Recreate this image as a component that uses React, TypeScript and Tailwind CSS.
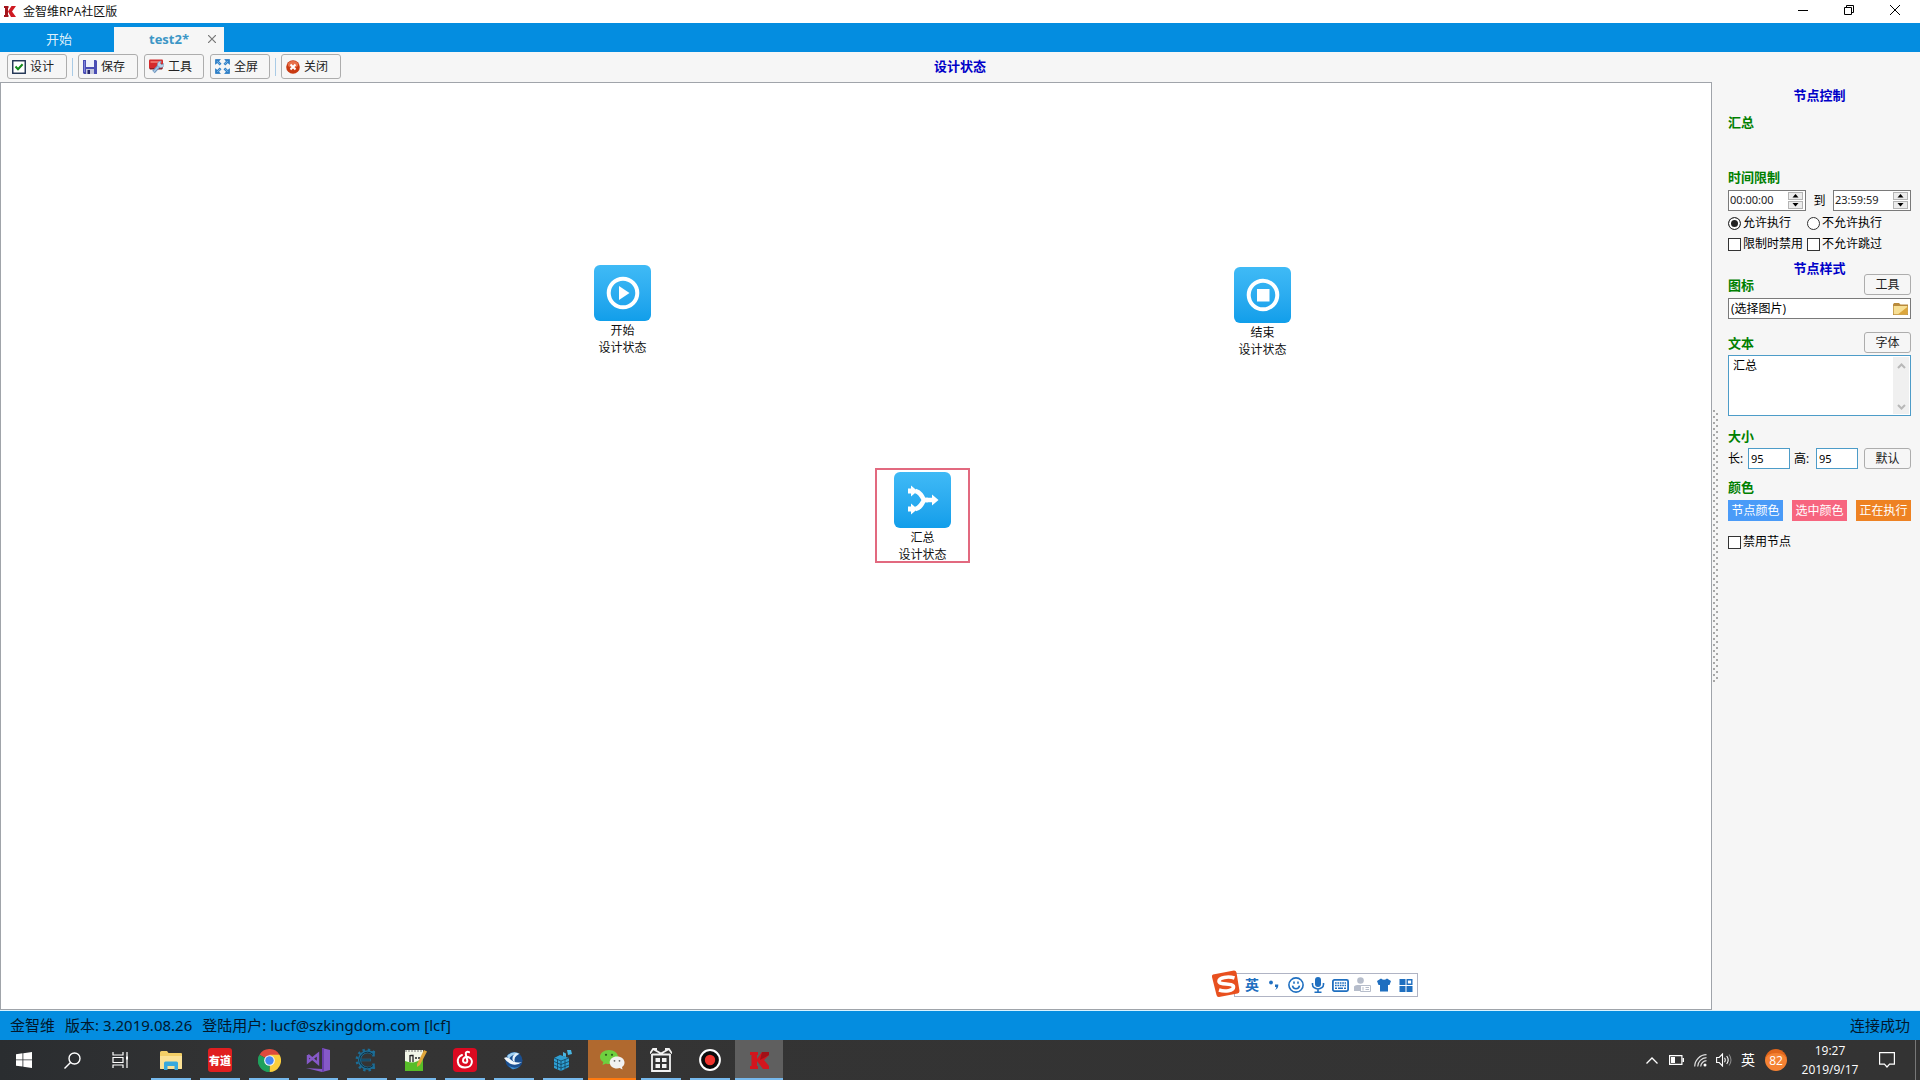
import React from "react";

type Kids = { children?: React.ReactNode };

function ToolButton({ icon, label }: { icon: React.ReactNode; label: string }) {
  return (
    <button className="flex h-[25px] w-[60px] items-center gap-1 rounded-[3px] border border-[#adadad] bg-[#f6f6f6] pl-1 text-xs text-[#222]">
      {icon}
      <span className="whitespace-nowrap">{label}</span>
    </button>
  );
}

const CheckIcon = () => (
  <svg width="14" height="14" viewBox="0 0 14 14">
    <rect x=".75" y=".75" width="12.5" height="12.5" fill="#fff" stroke="#1c3050" strokeWidth="1.4" />
    <path d="M3.5 6.5 6 9.2l4.6-5" fill="none" stroke="#128a1a" strokeWidth="2" />
  </svg>
);

const SaveIcon = () => (
  <svg width="14" height="14" viewBox="0 0 14 14">
    <path d="M0 0h13l1 1v13H1L0 13z" fill="#4a4db4" />
    <path d="M3 0h8v7H3z" fill="#eef0fb" />
    <path d="M1 1h1v11H1z" fill="#8084da" />
    <path d="M3 9h8v5H3z" fill="#c3c6dc" />
    <path d="M4.500 10h2.500v4H4.500z" fill="#26286c" />
  </svg>
);

const ToolIcon = () => (
  <svg width="15" height="15" viewBox="0 0 15 15">
    <path d="M0 1.500Q0 .5 1 .5h12q1 0 1 1V9H0z" fill="#d42a2b" />
    <path d="M1.500 2h11v2h-11z" fill="#ee6a62" />
    <path d="M0 9h14l-1 1.500H1z" fill="#8f1c20" />
    <path d="m4.500 13 6-6.500" stroke="#6f96bd" strokeWidth="3.400" />
    <path d="m4.700 12.800 6-6.500" stroke="#a9c8e4" strokeWidth="1.400" />
    <path d="M8.500 6.500q-.5-4 3.500-4.500l-.8 2.300 1.600 1.400L15 4.500q.5 4-3.500 4.300z" fill="#bcd3e8" stroke="#6f96bd" strokeWidth=".6" />
  </svg>
);

const FullIcon = () => (
  <svg width="15" height="15" viewBox="0 0 15 15" fill="#2f7fc6" stroke="#2f7fc6">
    {["", "rotate(90 7.5 7.5)", "rotate(180 7.5 7.5)", "rotate(270 7.5 7.5)"].map((t) => (
      <g key={t} transform={t}>
        <path d="M.5.5h4.8L.5 5.300z" strokeWidth=".8" />
        <path d="m2 2 3.600 3.600" strokeWidth="2.600" />
        <path d="M2 2.200 5 5.200" strokeWidth=".8" stroke="#9accf2" />
      </g>
    ))}
  </svg>
);

const CloseBall = () => (
  <svg width="14" height="14" viewBox="0 0 14 14">
    <circle cx="7" cy="7" r="6.8" fill="#c93a12" />
    <ellipse cx="7" cy="4.5" rx="5.2" ry="3.6" fill="#e8704a" />
    <path d="m4.5 4.5 5 5m0-5-5 5" stroke="#fff" strokeWidth="2" />
  </svg>
);

const TitleLogo = () => (
  <svg width="12" height="11" viewBox="0 0 12 11">
    <path d="M0 0h4.500v2H4v7h.5v2H0V9h1V2H0z" fill="#a3141b" />
    <path d="M7.500 0H12L8 5.500l4 5.500H7L4 5.500z" fill="#cf1a22" />
  </svg>
);

const TaskLogo = () => (
  <svg width="19" height="17" viewBox="0 0 19 17">
    <path d="M0 0h8v3H7v11h1v3H0v-3h1.500V3H0z" fill="#d2151d" />
    <path d="M12 0h7v3l-5 5 5 6v3h-6L7 9V7z" fill="#d2151d" />
    <path d="M12 0h7v3l-9 5z" fill="#a01117" />
  </svg>
);

function Node({ place, label, selected, children }: { place: string; label: string; selected?: boolean } & Kids) {
  return (
    <div
      className={`absolute flex h-[95px] w-[95px] flex-col items-center border-2 pt-0.5 text-xs text-[#111] ${place} ${
        selected ? "border-[#e2697f]" : "border-transparent"
      }`}
    >
      <div className="mb-px flex h-14 w-[57px] shrink-0 items-center justify-center rounded-[6px] bg-linear-to-b from-[#3fbaf6] to-[#109eea]">
        {children}
      </div>
      <span className="leading-[17px]">{label}</span>
      <span className="leading-[17px]">设计状态</span>
    </div>
  );
}

const Heading = ({ children }: Kids) => (
  <h2 className="text-center text-[13px] leading-4 font-bold text-[#0000c8]">{children}</h2>
);
const Label = ({ children }: Kids) => <h3 className="text-[13px] leading-4 font-bold text-[#008000]">{children}</h3>;

const SmallButton = ({ children }: Kids) => (
  <button className="h-[21px] w-[47px] rounded-[3px] border border-[#adadad] bg-[#f6f6f6] text-xs leading-none text-[#222]">
    {children}
  </button>
);

function TimeBox({ value, label }: { value: string; label: string }) {
  return (
    <div className="flex h-[21px] w-[78px] items-center border border-[#7a7a7a] bg-white pr-0.5">
      <input
        aria-label={label}
        defaultValue={value}
        className="w-0 flex-1 pl-px font-['Noto_Sans',sans-serif] text-[11px] text-[#222] outline-none"
      />
      <div className="flex w-[15px] flex-col gap-px">
        {["M.5 3.500h6L3.500 0z", "M.5 0h6L3.500 3.500z"].map((d) => (
          <button key={d} aria-label={label} className="flex h-2 items-center justify-center border border-[#b4b4b4] bg-[#ececec]">
            <svg width="7" height="4" viewBox="0 0 7 4">
              <path d={d} fill="#000" />
            </svg>
          </button>
        ))}
      </div>
    </div>
  );
}

function Choice({ type, label, checked }: { type: "radio" | "checkbox"; label: string; checked?: boolean }) {
  return (
    <label className="flex items-center gap-0.5 text-xs leading-4 whitespace-nowrap text-black">
      {type === "radio" ? (
        <input
          type="radio"
          name="permission"
          defaultChecked={checked}
          className="h-[13px] w-[13px] appearance-none rounded-full border border-[#333] bg-white checked:bg-[#222] checked:shadow-[inset_0_0_0_2px_white]"
        />
      ) : (
        <input type="checkbox" className="h-[13px] w-[13px] appearance-none border border-[#333] bg-white checked:bg-[#333]" />
      )}
      {label}
    </label>
  );
}

function SidePanel() {
  return (
    <aside className="flex w-[193px] shrink-0 flex-col pt-[5px] pr-[9px] pl-px">
      <Heading>节点控制</Heading>
      <div className="mt-[11px]">
        <Label>汇总</Label>
      </div>
      <div className="mt-[39px]">
        <Label>时间限制</Label>
      </div>
      <div className="mt-[5px] flex items-center justify-between text-xs">
        <TimeBox value="00:00:00" label="开始时间" />
        <span>到</span>
        <TimeBox value="23:59:59" label="结束时间" />
      </div>
      <div className="mt-1 grid grid-cols-[79px_1fr] gap-y-[5px]">
        <Choice type="radio" label="允许执行" checked />
        <Choice type="radio" label="不允许执行" />
        <Choice type="checkbox" label="限制时禁用" />
        <Choice type="checkbox" label="不允许跳过" />
      </div>
      <div className="mt-2">
        <Heading>节点样式</Heading>
      </div>
      <div className="-mt-0.5 flex h-[21px] items-center justify-between">
        <Label>图标</Label>
        <SmallButton>工具</SmallButton>
      </div>
      <div className="mt-[3px] flex h-[21px] items-center border border-[#7a7a7a] bg-white pr-0.5">
        <input aria-label="图标" defaultValue="(选择图片)" className="w-0 flex-1 pl-0.5 text-xs outline-none" />
        <button aria-label="选择图片">
          <svg width="15" height="12" viewBox="0 0 15 12">
            <path d="M0 1.500 1 0h5l1.500 1.500H15V12H0z" fill="#b98a3c" />
            <path d="M.7 3h13.600v8.300H.7z" fill="#f7df94" />
            <path d="M14.300 4v7.300H5z" fill="#dca63c" />
          </svg>
        </button>
      </div>
      <div className="mt-[13px] flex h-[21px] items-center justify-between">
        <Label>文本</Label>
        <SmallButton>字体</SmallButton>
      </div>
      <div className="mt-0.5 flex h-[61px] border border-[#4d9cc8] bg-white p-px">
        <textarea aria-label="文本" defaultValue="汇总" className="w-0 flex-1 resize-none pl-[3px] text-xs leading-[18px] outline-none" />
        <div className="flex w-4 flex-col items-center justify-between bg-[#f0f0f0] pt-1.5 pb-1">
          {["m1 5 3.500-3.500L8 5", "m1 1 3.500 3.500L8 1"].map((d) => (
            <svg key={d} width="9" height="6" viewBox="0 0 9 6" fill="none" stroke="#b8b8b8" strokeWidth="2">
              <path d={d} />
            </svg>
          ))}
        </div>
      </div>
      <div className="mt-3">
        <Label>大小</Label>
      </div>
      <div className="mt-1 flex items-center text-xs">
        <label className="flex items-center">
          <span className="w-5">长:</span>
          <input defaultValue="95" className="h-[21px] w-[42px] border border-[#4d9cc8] bg-white pl-0.5 font-['Noto_Sans',sans-serif] text-[11px]" />
        </label>
        <label className="ml-1 flex items-center">
          <span className="w-[22px]">高:</span>
          <input defaultValue="95" className="h-[21px] w-[42px] border border-[#4d9cc8] bg-white pl-0.5 font-['Noto_Sans',sans-serif] text-[11px]" />
        </label>
        <div className="ml-auto flex">
          <SmallButton>默认</SmallButton>
        </div>
      </div>
      <div className="mt-2.5">
        <Label>颜色</Label>
      </div>
      <div className="mt-[5px] flex justify-between text-xs text-white">
        <button className="h-[21px] w-[55px] bg-[#4a9bf8]">节点颜色</button>
        <button className="h-[21px] w-[55px] bg-[#f7657f]">选中颜色</button>
        <button className="h-[21px] w-[55px] bg-[#ee8223]">正在执行</button>
      </div>
      <div className="mt-[13px]">
        <Choice type="checkbox" label="禁用节点" />
      </div>
    </aside>
  );
}

const ImeCell = ({ children }: Kids) => <div className="flex w-[22px] items-center justify-center">{children}</div>;

function ImeBar() {
  return (
    <div className="absolute right-[293px] bottom-[12px] flex h-6 w-[184px] justify-end border border-[#b0b4c4] bg-white text-[#1f6fc0]">
      <svg className="absolute -top-[5px] -left-6" width="30" height="30" viewBox="0 0 30 30">
        <path d="m2 5.500 21-4q2 0 2.500 2L28.500 22q0 2-2 2.500L8 28q-2 .3-2.500-2L1 8Q.5 6 2 5.500z" fill="#e8501f" />
        <path d="M23.500 9C17 7 8 8.500 8 12.200c0 4.300 14.500 1.300 14.500 5.800 0 3.800-8.500 5-14.500 3" fill="none" stroke="#fff" strokeWidth="3.600" />
      </svg>
      <ImeCell>
        <span className="text-sm leading-none font-bold">英</span>
      </ImeCell>
      <ImeCell>
        <svg width="12" height="12" viewBox="0 0 12 12" fill="#1f6fc0">
          <circle cx="3" cy="3.500" r="1.900" />
          <path d="M7 5.500h3.300q.3 4-3.300 5.500 1.500-1.500 1.300-3H7z" />
        </svg>
      </ImeCell>
      <ImeCell>
        <svg width="16" height="16" viewBox="0 0 16 16" fill="none" stroke="#1f6fc0" strokeWidth="1.600">
          <circle cx="8" cy="8" r="7.100" />
          <path d="M4.500 8.700c.5 4 6.500 4 7 0M6 4.500v2.200M10 4.500v2.200" />
        </svg>
      </ImeCell>
      <ImeCell>
        <svg width="14" height="16" viewBox="0 0 14 16" fill="none" stroke="#1f6fc0" strokeWidth="1.600">
          <rect x="4" y="0" width="6" height="10" rx="3" fill="#1f6fc0" stroke="none" />
          <path d="M1.500 6v1.500a5.500 4.500 0 0 0 11 0V6M7 12v3M3.500 15.200h7" />
        </svg>
      </ImeCell>
      <ImeCell>
        <svg width="17" height="13" viewBox="0 0 17 13">
          <rect x=".9" y=".9" width="15.200" height="11.200" rx="1.500" fill="#fff" stroke="#1f6fc0" strokeWidth="1.800" />
          <path d="M3 4h11M3 6.500h11" stroke="#1f6fc0" strokeWidth="1.600" strokeDasharray="1.700 .7" />
          <path d="M3 9.300h2m1 0h5m1 0h2" stroke="#1f6fc0" strokeWidth="1.600" />
        </svg>
      </ImeCell>
      <ImeCell>
        <svg width="17" height="16" viewBox="0 0 17 16" fill="#b6bdcb">
          <circle cx="6.500" cy="3.500" r="3.300" />
          <path d="M0 14V9.500Q1 8 3 8h7v6z" />
          <path d="M6.500 8.500h10v6h-10z" fill="#fff" stroke="#b6bdcb" />
          <path d="M9 10v3.500M11.500 10.500H15M11.500 12.500H15" stroke="#b6bdcb" />
        </svg>
      </ImeCell>
      <ImeCell>
        <svg width="14" height="14" viewBox="0 0 14 14" fill="#1f6fc0">
          <path d="M4 .5q3 2.500 6 0l4 2.500-1.500 4H11v6.500H3V7H1.500L0 3z" />
        </svg>
      </ImeCell>
      <ImeCell>
        <svg width="14" height="13" viewBox="0 0 14 13" fill="#1f6fc0">
          <path d="M.5 0h6v6h-6zM.5 7h6v6h-6zM7.500 7h6v6h-6z" />
          <path d="M8.200.7h4.600v4.600H8.200z" fill="#fff" stroke="#1f6fc0" strokeWidth="1.400" />
        </svg>
      </ImeCell>
    </div>
  );
}

const taskIcons: { name: string; art: React.ReactNode; tile?: string; line?: string }[] = [
  {
    name: "Explorer",
    art: (
      <svg width="22" height="19" viewBox="0 0 22 19">
        <path d="M0 1.500Q0 0 1.500 0H7l1.500 2H21q1 0 1 1v14q0 1-1 1H1q-1 0-1-1z" fill="#f3cf67" />
        <path d="M0 5h22v12q0 1-1 1H1q-1 0-1-1z" fill="#fbe296" />
        <path d="M4 19v-7q0-1.500 1.500-1.500h11Q18 10.500 18 12v7h-3.500v-4h-7v4z" fill="#38a9dd" />
      </svg>
    ),
  },
  {
    name: "Youdao",
    art: (
      <span className="flex h-6 w-6 items-center justify-center overflow-hidden rounded-[3px] bg-[#e01f20] text-[11px] leading-none font-black whitespace-nowrap text-white">
        有道
      </span>
    ),
  },
  {
    name: "Chrome",
    art: (
      <svg width="23" height="23" viewBox="0 0 24 24">
        <path d="M12 12 1.600 6A12 12 0 0 1 22.400 6z" fill="#de4a3c" />
        <path d="M12 12 22.400 6A12 12 0 0 1 12 24z" fill="#fbce3c" />
        <path d="M12 12v12A12 12 0 0 1 1.600 6z" fill="#1fa15d" />
        <path d="M12 6h10.400L17.200 15 12 24l4-9z" fill="#fbce3c" />
        <path d="M1.600 6 7 15l5 3-1 6A12 12 0 0 1 1.600 6z" fill="#1fa15d" />
        <circle cx="12" cy="12" r="5.600" fill="#f4f4f4" />
        <circle cx="12" cy="12" r="4.400" fill="#4587f3" />
      </svg>
    ),
  },
  {
    name: "Visual Studio",
    art: (
      <svg width="24" height="24" viewBox="0 0 24 24">
        <path d="m16 0 8 2v20l-8 2-16-4 16 1z" fill="#8659c8" />
        <path d="m16 0 2 .5v23l-2 .5z" fill="#6b3fae" />
        <path d="M2 7v7l10-8v9.500L2 7" fill="none" stroke="#8659c8" strokeWidth="2.400" />
      </svg>
    ),
  },
  {
    name: "Engine",
    art: (
      <svg width="24" height="24" viewBox="0 0 24 24" fill="none" stroke="#1c6d96">
        <path d="M18.500 6A8.300 8.300 0 1 0 18.500 18" strokeWidth="3" />
        <path d="M19.500 4.800A10.300 10.300 0 1 0 19.500 19.200" strokeWidth="2.600" strokeDasharray="2.400 2.800" />
        <path d="M5 12h11M18.500 3v5.500M18.500 21v-5.500" strokeWidth="2.600" />
        <path d="M18 6.500a7.800 7.800 0 1 0 0 11M6 12h9.500" stroke="#12303f" strokeWidth="1" />
      </svg>
    ),
  },
  {
    name: "Notepad",
    art: (
      <svg width="22" height="24" viewBox="0 0 22 24">
        <path d="M0 2h18v21H0z" fill="#f2f6e8" />
        <path d="M0 13q9 4 18-3v13H0z" fill="#58bd28" />
        <path d="M1 2v2m3-2v2m3-2v2m3-2v2m3-2v2m3-2v2" stroke="#777" />
        <path d="M5 7v7M5.500 7.500H8V14M10 10h2m1 0h2" stroke="#222" strokeWidth="1.300" fill="none" />
        <path d="m12 16 7-14 3 1.500-7 13.500-3 2z" fill="#dfa53a" />
      </svg>
    ),
  },
  {
    name: "Music",
    art: (
      <svg width="24" height="24" viewBox="0 0 24 24">
        <rect width="24" height="24" rx="4" fill="#db0a21" />
        <path
          d="M16 4.200c-2-1-3.600.2-3.200 2l1.500 6.300c.4 3-4.300 3.200-4.300 0C10 9.500 13 8.500 15 9c6 1.600 5 10.500-3 10.500-9 0-9-10.500-3-12.500"
          fill="none"
          stroke="#fff"
          strokeWidth="2"
          strokeLinecap="round"
        />
      </svg>
    ),
  },
  {
    name: "Browser",
    art: (
      <svg width="20" height="19" viewBox="0 0 20 19">
        <circle cx="10" cy="9.500" r="8.500" fill="#1a4f90" />
        <path d="M3 5q6-6.500 13-2-8-.5-11 5z" fill="#9fd0f2" />
        <path d="M0 7q3-2 6 1 5 5 12 3-5 4-11 2-4-1.500-7-6z" fill="#f2f8fc" />
        <path d="M12 2q-5 3-3 8l2 1q-2-5 4-8z" fill="#e4f1fb" />
        <path d="M4 14q6 5 12 1-4 4-8 3z" fill="#3f8fd0" />
      </svg>
    ),
  },
  {
    name: "Registry",
    art: (
      <svg width="20" height="22" viewBox="0 0 20 22">
        <path d="m1 9 6-3 9 3v9l-8 4-7-3z" fill="#2f9fd2" />
        <path d="m1 9 7 3 8-3M1 12.500l7 3 8-3M1 16l7 3 8-3M8 12v10M4.500 10.500v10M12 10.500v10" stroke="#12425e" strokeWidth=".8" fill="none" />
        <path d="m10 3 3 1.500V8l-3-1zM14 1h4l1 4-4 1z" fill="#49b6e2" />
      </svg>
    ),
  },
  {
    name: "WeChat",
    tile: "bg-[#b0692f]",
    line: "w-full bg-[#ff7a10]",
    art: (
      <svg width="25" height="20" viewBox="0 0 25 20">
        <path d="M9 0c5 0 9 3 9 7s-4 7-9 7q-1.500 0-3-.5L2.500 15l.8-3Q0 10 0 7c0-4 4-7 9-7z" fill="#6ed03f" />
        <path d="M17 6.500c4.400 0 7.500 2.600 7.500 6 0 2-1 3.500-2.500 4.500l.5 2.500-2.800-1.400q-1 .4-2.700.4c-4.200 0-7.300-2.600-7.300-6s3-6 7.300-6z" fill="#f1f1f1" />
        <g fill="#2c5c1c">
          <circle cx="6" cy="4.800" r="1.100" />
          <circle cx="12" cy="4.800" r="1.100" />
        </g>
        <g fill="#666">
          <circle cx="14.500" cy="10.800" r=".9" />
          <circle cx="19.500" cy="10.800" r=".9" />
        </g>
      </svg>
    ),
  },
  {
    name: "Gift",
    art: (
      <svg width="22" height="24" viewBox="0 0 22 24" fill="none" stroke="#f2f2f2" strokeWidth="1.800">
        <path d="M2 6v17h18V6M0 5.500 3 1l8 4.500L19 1l3 4.500M3 1h4M15 1h4M2 6.500h18" />
        <path d="M5.500 10h4.500v4H5.500zM12 10h4.500v4H12zM5.500 16h4.500v4H5.500zM12 16h4.500v4H12z" fill="#f2f2f2" stroke="none" />
      </svg>
    ),
  },
  {
    name: "Recorder",
    art: (
      <svg width="22" height="22" viewBox="0 0 22 22">
        <circle cx="11" cy="11" r="9.900" fill="#0c0c0c" stroke="#fff" strokeWidth="2" />
        <circle cx="11" cy="11" r="5.200" fill="#f0332c" />
      </svg>
    ),
  },
  { name: "RPA", tile: "bg-[#5f5f5f]", line: "w-full bg-[#76b9ed]", art: <TaskLogo /> },
];

function Taskbar() {
  return (
    <footer className="flex h-10 shrink-0 items-stretch bg-linear-to-r from-[#2a2d30] from-0% via-[#343434] via-15% to-[#333333] text-white">
      <button aria-label="开始菜单" className="flex w-12 items-center justify-center">
        <svg width="16" height="16" viewBox="0 0 16 16" fill="#fff">
          <path d="M0 2.200 6.500 1.300v6.200H0zM7.300 1.200 16 0v7.500H7.300zM0 8.300h6.500v6.300L0 13.700zM7.300 8.300H16V16l-8.700-1.200z" />
        </svg>
      </button>
      <button aria-label="搜索" className="flex w-12 items-center justify-center">
        <svg width="17" height="17" viewBox="0 0 17 17" fill="none" stroke="#fff" strokeWidth="1.400">
          <circle cx="10.500" cy="6.500" r="5.500" />
          <path d="m6.500 10.500-6 6" />
        </svg>
      </button>
      <button aria-label="任务视图" className="mr-[3px] flex w-12 items-center justify-center">
        <svg width="17" height="16" viewBox="0 0 17 16" fill="none" stroke="#fff" strokeWidth="1.200">
          <path d="M1 0v3h10V0M1 16v-3h10v3M1 5.500h10v5H1zM15 0v16" />
          <path d="M14 4.500h2v3h-2z" fill="#fff" stroke="none" />
        </svg>
      </button>
      <nav className="flex gap-px">
        {taskIcons.map((t) => (
          <button key={t.name} aria-label={t.name} className={`flex w-12 flex-col items-center ${t.tile ?? ""}`}>
            <span className="flex w-full flex-1 items-center justify-center pt-0.5">{t.art}</span>
            <span className={`h-0.5 ${t.line ?? "w-10 bg-[#76b9ed]"}`} />
          </button>
        ))}
      </nav>
      <div className="ml-auto flex items-center">
        <svg className="mr-[11px]" width="12" height="7" viewBox="0 0 12 7" fill="none" stroke="#fff" strokeWidth="1.300">
          <path d="m.5 6.500 5.500-5.500 5.500 5.500" />
        </svg>
        <svg className="mr-2.5" width="15" height="10" viewBox="0 0 15 10">
          <path d="M.6.6h12.300v8.800H.6z" fill="none" stroke="#fff" strokeWidth="1.200" />
          <path d="M2 2h4v6H2zM13.500 3H15v4h-1.500z" fill="#fff" />
        </svg>
        <svg className="mr-[9px]" width="13" height="13" viewBox="0 0 13 13" fill="none" stroke="#ddd">
          <path d="M.7 12.500A12 12 0 0 1 12.500.7M3.700 12.500a9 9 0 0 1 8.800-8.800M6.700 12.500a6 6 0 0 1 5.800-5.800" strokeWidth="1.200" />
          <circle cx="11" cy="11" r="1.500" fill="#fff" stroke="none" />
        </svg>
        <svg className="mr-[9px]" width="16" height="14" viewBox="0 0 16 14" fill="none" stroke="#fff" strokeWidth="1.100">
          <path d="M.6 4.500h2.600L6.500 1v12L3.200 9.500H.6zM8.500 4.700q1.500 2.300 0 4.600M10.700 3q3 4 0 8" />
          <path d="M13 1.500q4 5.500 0 11" stroke="#888" />
        </svg>
        <span className="mr-2.5 text-sm leading-none">英</span>
        <span className="flex h-[22px] w-[22px] items-center justify-center rounded-full border-t-4 border-[#e0661c] bg-[#f58233] pb-0.5 text-xs leading-none">
          82
        </span>
        <div className="ml-[13px] w-[60px] text-center text-xs leading-[19px]">
          <div>19:27</div>
          <div>2019/9/17</div>
        </div>
        <button aria-label="通知" className="ml-[19px]">
          <svg width="16" height="16" viewBox="0 0 16 16" fill="none" stroke="#fff" strokeWidth="1.200">
            <path d="M.6.600h14.800v11.600h-4.800L8 15l-2.600-2.800H.6z" />
          </svg>
        </button>
        <div className="ml-5 h-10 w-px bg-[#777]" />
        <div className="w-1" />
      </div>
    </footer>
  );
}

export default function App() {
  return (
    <div className="flex h-screen flex-col bg-[#f6f6f6] font-['Open_Sans','Noto_Sans_CJK_SC',sans-serif] select-none">
      <header className="flex h-[23px] shrink-0 items-center bg-white pl-1 text-xs text-[#111]">
        <TitleLogo />
        <span className="ml-[7px]">金智维RPA社区版</span>
        <div className="ml-auto flex h-full items-center gap-9 pr-5 pb-[3px]">
          <button aria-label="最小化">
            <svg width="10" height="10" viewBox="0 0 10 10" stroke="#000">
              <path d="M0 5.500h10" />
            </svg>
          </button>
          <button aria-label="还原">
            <svg width="10" height="10" viewBox="0 0 10 10" fill="none" stroke="#000">
              <path d="M.5 2.500h7v7h-7zM2.500 2.500v-2h7v7h-2" />
            </svg>
          </button>
          <button aria-label="关闭窗口">
            <svg width="10" height="10" viewBox="0 0 10 10" stroke="#000">
              <path d="m0 0 10 10M10 0 0 10" />
            </svg>
          </button>
        </div>
      </header>

      <nav className="flex h-[29px] shrink-0 items-end bg-[#048de0] text-[13px]">
        <button className="h-[25px] w-[114px] pl-1 text-[#dff0fb]">开始</button>
        <div className="flex h-[25px] w-[110px] items-center bg-[#f6f6f6]">
          <button className="w-[94px] pl-4 font-bold text-[#3c96c6]">test2*</button>
          <button aria-label="关闭标签" className="pb-0.5">
            <svg width="8" height="8" viewBox="0 0 8 8" stroke="#777" strokeWidth="1.200">
              <path d="m0 0 8 8M8 0 0 8" />
            </svg>
          </button>
        </div>
      </nav>

      <div className="grid h-[30px] shrink-0 grid-cols-[1fr_auto_1fr] items-center pb-1">
        <div className="flex items-center gap-[5px] pt-0.5 pl-[7px]">
          <ToolButton icon={<CheckIcon />} label="设计" />
          <span className="h-[18px] w-px bg-[#a9cbe6]" />
          <div className="flex gap-1.5">
            <ToolButton icon={<SaveIcon />} label="保存" />
            <ToolButton icon={<ToolIcon />} label="工具" />
            <ToolButton icon={<FullIcon />} label="全屏" />
          </div>
          <span className="h-[18px] w-px bg-[#a9cbe6]" />
          <ToolButton icon={<CloseBall />} label="关闭" />
        </div>
        <h1 className="text-[13px] leading-4 font-bold text-[#0000c8]">设计状态</h1>
      </div>

      <div className="flex min-h-0 flex-1">
        <main className="relative flex-1 border border-[#a0a4aa] bg-white">
          <Node place="left-[574px] top-[178px]" label="开始">
            <svg width="34" height="34" viewBox="0 0 34 34">
              <circle cx="17" cy="17" r="14.300" fill="none" stroke="#fff" strokeWidth="4" />
              <path d="M13 10v14l10.500-7z" fill="#fff" />
            </svg>
          </Node>
          <Node place="left-[1214px] top-[180px]" label="结束">
            <svg width="34" height="34" viewBox="0 0 34 34">
              <circle cx="17" cy="17" r="14.300" fill="none" stroke="#fff" strokeWidth="4" />
              <path d="M11 11h12.500v12.500H11z" fill="#fff" />
            </svg>
          </Node>
          <Node place="left-[874px] top-[385px]" label="汇总" selected>
            <svg width="32" height="30" viewBox="0 0 32 30" fill="#fff">
              <path d="M1 3.500h3V.5l6.500 5.500L4 11.500v-3H1zM1 21.500h3v-3l6.500 5.500L4 29.500v-3H1zM19 12.700h6V9.500L31.500 15 25 20.500v-3.200h-6z" />
              <path d="M8.500 6C13 7 15 11 17 15c-2 4-4 8-8.500 9" fill="none" stroke="#fff" strokeWidth="4.600" />
              <path d="M15 12.700h6v4.600h-6z" />
            </svg>
          </Node>
          <ImeBar />
        </main>
        <div className="flex w-[15px] shrink-0 items-center pl-px">
          <svg width="6" height="272">
            <defs>
              <pattern id="grip" width="6" height="6" patternUnits="userSpaceOnUse">
                <path d="M0 0h2v2H0zM3 3h2v2H3z" fill="#a8a8a8" />
              </pattern>
            </defs>
            <rect width="6" height="272" fill="url(#grip)" />
          </svg>
        </div>
        <SidePanel />
      </div>

      <div className="flex h-[30px] shrink-0 items-center gap-2.5 border-t border-[#d8f2ff] bg-[#048de0] px-2.5 font-['Noto_Sans','Noto_Sans_CJK_SC',sans-serif] text-[15px] text-[#03172b]">
        <span>金智维</span>
        <span>版本: 3.2019.08.26</span>
        <span>登陆用户: lucf@szkingdom.com [lcf]</span>
        <span className="ml-auto">连接成功</span>
      </div>
      <Taskbar />
    </div>
  );
}
